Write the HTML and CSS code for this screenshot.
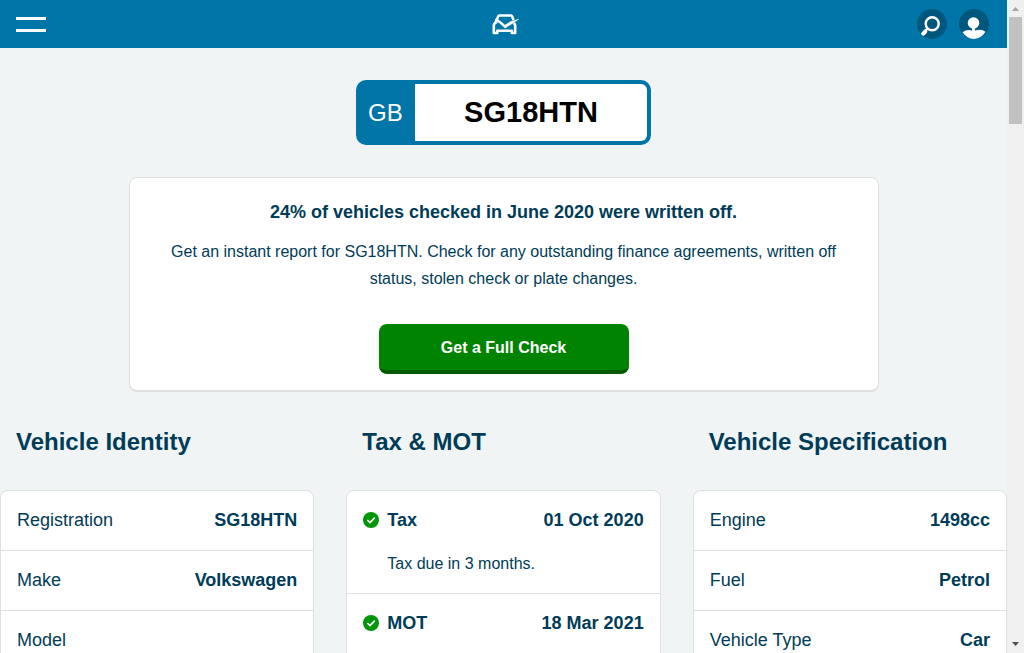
FILE: index.html
```
<!DOCTYPE html>
<html lang="en">
<head>
<meta charset="utf-8">
<meta name="viewport" content="width=device-width, initial-scale=1">
<title>SG18HTN vehicle check</title>
<link rel="stylesheet" href="styles.css">
</head>
<body>
<div class="shell">
  <div class="page">
    <header class="topbar">
      <div class="topbar-side">
        <button class="menu-button" type="button" aria-label="Menu"><span class="menu-line"></span><span class="menu-line"></span></button>
      </div>
      <a class="logo" href="#" aria-label="Home">
        <svg width="32" height="22" viewBox="0 0 32 22" fill="none" stroke="#fff">
          <path d="M9.400 8 11.200 3.200Q11.500 2.400 12.300 2.400H24Q24.800 2.400 25.100 3.200L26.500 7" stroke-width="2.500"/>
          <path d="M9.500 9.200Q6.800 10.400 6.800 12.600V20H10.300V17.700H24.800V20H28.200V13Q28.200 11.400 26.800 10" stroke-width="2.600" stroke-linejoin="round"/>
          <path d="M8.500 5.800 13 7.800 18 12 23.500 8.600 32 6 26.400 10 18 15.200 12.400 10 7.800 8.600Z" fill="#fff" stroke-width=".3"/>
        </svg>
      </a>
      <div class="topbar-side topbar-actions">
        <button class="round-button" type="button" aria-label="Search">
          <svg width="30" height="30" viewBox="0 0 30 30">
            <circle cx="15.200" cy="14.700" r="6.500" fill="none" stroke="#fff" stroke-width="2.400"/>
            <path d="M10.500 19.600 8 22.400" stroke="#fff" stroke-width="2.200"/>
            <path d="M8.200 22.600 6.300 24.600" stroke="#fff" stroke-width="4.200" stroke-linecap="round"/>
          </svg>
        </button>
        <button class="round-button" type="button" aria-label="Account">
          <svg width="30" height="30" viewBox="0 0 30 30" fill="#fff">
            <circle cx="14.500" cy="14" r="5.800"/>
            <path d="M13 18h3v3.400Q22.500 19.700 26.500 22.700A15 15 0 0 1 15 30 15 15 0 0 1 3.500 23.200Q7.500 19.900 13 21.400Z"/>
          </svg>
        </button>
      </div>
    </header>
    <main class="content">
      <div class="plate"><span class="plate-country">GB</span><span class="plate-number">SG18HTN</span></div>
      <section class="promo">
        <h1 class="promo-title">24% of vehicles checked in June 2020 were written off.</h1>
        <p class="promo-text">Get an instant report for SG18HTN. Check for any outstanding finance agreements, written off status, stolen check or plate changes.</p>
        <button class="check-button" type="button">Get a Full Check</button>
      </section>
      <div class="columns">
        <section class="column">
          <h2 class="column-title">Vehicle Identity</h2>
          <dl class="card">
            <div class="row"><dt>Registration</dt><dd>SG18HTN</dd></div>
            <div class="row"><dt>Make</dt><dd>Volkswagen</dd></div>
            <div class="row"><dt>Model</dt><dd></dd></div>
          </dl>
        </section>
        <section class="column">
          <h2 class="column-title">Tax &amp; MOT</h2>
          <dl class="card">
            <div class="row">
              <dt class="status-name"><svg class="tick" width="16" height="16" viewBox="0 0 16 16"><circle cx="8" cy="8" r="8" fill="#009607"/><path d="m4.300 8 2.700 2.600 4.800-4.900" fill="none" stroke="#fff" stroke-width="1.700"/></svg>Tax</dt>
              <dd>01 Oct 2020</dd>
              <dd class="status-note">Tax due in 3 months.</dd>
            </div>
            <div class="row">
              <dt class="status-name"><svg class="tick" width="16" height="16" viewBox="0 0 16 16"><circle cx="8" cy="8" r="8" fill="#009607"/><path d="m4.300 8 2.700 2.600 4.800-4.900" fill="none" stroke="#fff" stroke-width="1.700"/></svg>MOT</dt>
              <dd>18 Mar 2021</dd>
            </div>
          </dl>
        </section>
        <section class="column">
          <h2 class="column-title">Vehicle Specification</h2>
          <dl class="card">
            <div class="row"><dt>Engine</dt><dd>1498cc</dd></div>
            <div class="row"><dt>Fuel</dt><dd>Petrol</dd></div>
            <div class="row"><dt>Vehicle Type</dt><dd>Car</dd></div>
          </dl>
        </section>
      </div>
    </main>
  </div>
  <div class="scrollbar" aria-hidden="true">
    <svg class="scroll-arrow" width="17" height="17" viewBox="0 0 17 17"><path d="M5 11h7L8.500 7Z" fill="#a3a3a3"/></svg>
    <div class="scroll-track"><div class="scroll-thumb"></div></div>
    <svg class="scroll-arrow" width="17" height="17" viewBox="0 0 17 17"><path d="M5 6h7l-3.500 4Z" fill="#505050"/></svg>
  </div>
</div>
</body>
</html>
```
FILE: styles.css
```
* {
  box-sizing: border-box;
}

body {
  margin: 0;
  background: #f0f4f5;
  color: #003c57;
  font-family: "Liberation Sans", Arial, sans-serif;
  font-size: 18px;
  line-height: 27px;
}

button {
  border: 0;
  padding: 0;
  font: inherit;
  cursor: pointer;
}

.shell {
  display: flex;
  height: 100vh;
  overflow: hidden;
}

.page {
  flex: 1;
  min-width: 0;
}

.topbar {
  display: flex;
  align-items: center;
  height: 48px;
  padding: 0 18px 0 16px;
  background: #0075a8;
}

.topbar-side {
  display: flex;
  flex: 1;
}

.topbar-actions {
  justify-content: flex-end;
  gap: 12px;
}

.menu-button {
  display: flex;
  flex-direction: column;
  gap: 9px;
  width: 30px;
  background: none;
}

.menu-line {
  height: 3px;
  background: #fff;
}

.logo {
  display: flex;
}

.round-button {
  display: flex;
  width: 30px;
  height: 30px;
  border-radius: 50%;
  background: #00577d;
}

.content {
  padding-top: 32px;
}

.plate {
  display: flex;
  width: 295px;
  height: 65px;
  margin: 0 auto 32px;
  border: 4px solid #0075a8;
  border-radius: 10px;
  background: #0075a8;
}

.plate-country,
.plate-number {
  display: flex;
  align-items: center;
}

.plate-country {
  width: 55px;
  padding-left: 8px;
  color: #fff;
  font-size: 24px;
}

.plate-number {
  flex: 1;
  justify-content: center;
  border-radius: 0 6px 6px 0;
  background: #fff;
  color: #000;
  font-size: 29px;
  font-weight: bold;
}

.promo {
  max-width: 750px;
  margin: 0 auto 32px;
  padding: 21px 24px 16px;
  border: 1px solid #dedfe0;
  border-bottom-width: 2px;
  border-radius: 8px;
  background: #fff;
  text-align: center;
}

.promo-title {
  margin: 0 0 12px;
  font-size: 18px;
}

.promo-text {
  margin: 0 0 32px;
  font-size: 16px;
}

.check-button {
  display: block;
  width: 250px;
  height: 50px;
  margin: 0 auto;
  border-bottom: 4px solid #005a00;
  border-radius: 8px;
  background: #008300;
  color: #fff;
  font-size: 16px;
  font-weight: bold;
}

.columns {
  display: grid;
  grid-template-columns: repeat(3, 1fr);
  gap: 32px;
}

.column-title {
  margin: 0 0 30px;
  padding: 0 16px;
  font-size: 24px;
  line-height: 36px;
}

.card {
  margin: 0;
  padding-bottom: 16px;
  border: 1px solid #dedfe0;
  border-radius: 8px;
  background: #fff;
}

.row {
  display: flex;
  flex-wrap: wrap;
  justify-content: space-between;
  padding: 16px;
}

.row + .row {
  border-top: 1px solid #dedfe0;
}

.row dd {
  margin: 0;
  font-weight: bold;
}

.row .status-note {
  width: 100%;
  margin-top: 16px;
  padding-left: 24px;
  font-size: 16px;
  font-weight: normal;
}

.status-name {
  display: flex;
  align-items: center;
  gap: 8px;
  font-weight: bold;
}

.tick {
  margin-bottom: 2px;
}

.scrollbar {
  display: flex;
  flex-direction: column;
  width: 17px;
  background: #f0f0f0;
}

.scroll-track {
  flex: 1;
  padding: 0 2px;
}

.scroll-thumb {
  height: 107px;
  background: #c1c1c1;
}
```
